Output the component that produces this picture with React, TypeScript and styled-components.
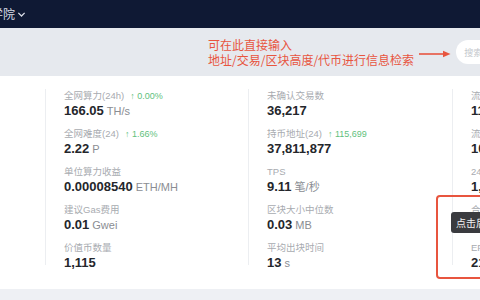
import React from 'react';
import styled, { createGlobalStyle } from 'styled-components';

const GlobalStyle = createGlobalStyle`
  html, body {
    margin: 0;
    padding: 0;
    width: 480px;
    height: 300px;
    overflow: hidden;
    background: #eef0f4;
    font-family: "Liberation Sans", "Noto Sans CJK SC", sans-serif;
  }
`;

const Page = styled.div`
  position: relative;
  width: 480px;
  height: 300px;
  overflow: hidden;
`;

const Header = styled.div`
  height: 28px;
  background: #0f1934;
  display: flex;
  align-items: center;
`;

const NavItem = styled.div`
  margin-left: -9px;
  display: flex;
  align-items: center;
  gap: 2px;
  color: #d8dce6;
  font-family: "Noto Sans CJK SC", sans-serif;
  font-size: 12px;
  line-height: 14px;
`;

const Band = styled.div`
  height: 48px;
  background: #e6e9ee;
  display: flex;
  align-items: center;
  padding-left: 208px;
`;

const Hint = styled.div`
  color: #e8553f;
  font-family: "Noto Sans CJK SC", sans-serif;
  font-size: 12px;
  line-height: 15px;
  white-space: nowrap;
`;

const Arrow = styled.svg`
  margin-left: 5px;
  margin-top: 4px;
  flex-shrink: 0;
`;

const Search = styled.div`
  margin-left: 5px;
  flex-shrink: 0;
  width: 120px;
  height: 24px;
  border-radius: 12px;
  background: #ffffff;
  display: flex;
  align-items: center;
  padding-left: 8px;
  color: #c4c7cc;
  font-family: "Noto Sans CJK SC", sans-serif;
  font-size: 9px;
  white-space: nowrap;
`;

const Card = styled.div`
  background: #ffffff;
  height: 213px;
  box-sizing: border-box;
  padding: 13px 0 0 45px;
  display: grid;
  grid-template-columns: 203px 204px 203px;
  overflow: hidden;
`;

const Column = styled.div`
  border-left: 1px solid #eceef1;
  padding-left: 18px;
  display: flex;
  flex-direction: column;
  gap: 8px;
  height: 176px;
  white-space: nowrap;
`;

const Stat = styled.div`
  display: flex;
  flex-direction: column;
`;

const Label = styled.div`
  font-size: 9.5px;
  line-height: 14px;
  color: #a8abb0;
  display: flex;
  align-items: center;
`;

const Change = styled.span`
  margin-left: 6px;
  font-size: 9px;
  color: #5fbf7d;
`;

const Value = styled.div`
  font-size: 13px;
  line-height: 16px;
  font-weight: 700;
  color: #24262b;
`;

const Unit = styled.span`
  margin-left: 3px;
  font-size: 11px;
  font-weight: 400;
  color: #8a8d93;
`;

const Highlight = styled.div`
  position: absolute;
  left: 436px;
  top: 195px;
  width: 60px;
  height: 84px;
  border: 2px solid #e8553f;
  border-radius: 4px;
  box-sizing: border-box;
`;

const Tip = styled.div`
  position: absolute;
  left: 451px;
  top: 212px;
  height: 21px;
  padding: 0 5px;
  border-radius: 3px;
  background: #3a3b3f;
  color: #f2f2f2;
  font-family: "Noto Sans CJK SC", sans-serif;
  font-size: 10px;
  line-height: 21px;
  white-space: nowrap;
`;

interface StatItem {
  label: string;
  value: string;
  unit?: string;
  change?: string;
}

const columns: StatItem[][] = [
  [
    { label: '全网算力(24h)', value: '166.05', unit: 'TH/s', change: '↑ 0.00%' },
    { label: '全网难度(24)', value: '2.22', unit: 'P', change: '↑ 1.66%' },
    { label: '单位算力收益', value: '0.00008540', unit: 'ETH/MH' },
    { label: '建议Gas费用', value: '0.01', unit: 'Gwei' },
    { label: '价值币数量', value: '1,115' },
  ],
  [
    { label: '未确认交易数', value: '36,217' },
    { label: '持币地址(24)', value: '37,811,877', change: '↑ 115,699' },
    { label: 'TPS', value: '9.11', unit: '笔/秒' },
    { label: '区块大小中位数', value: '0.03', unit: 'MB' },
    { label: '平均出块时间', value: '13', unit: 's' },
  ],
  [
    { label: '流通市值', value: '118,210,633' },
    { label: '流通量', value: '108,523,711' },
    { label: '24h交易量', value: '1,236,118' },
    { label: '合约数量', value: '1,847,210' },
    { label: 'EPI', value: '21.43' },
  ],
];

const App = () => {
  return (
    <>
      <GlobalStyle />
      <Page>
        <Header>
          <NavItem>
            学院
            <svg width='9' height='9' viewBox='0 0 10 10'>
              <path d='M1.5 3.2 L5 6.7 L8.5 3.2' fill='none' stroke='#d8dce6' strokeWidth='1.4' />
            </svg>
          </NavItem>
        </Header>
        <Band>
          <Hint>
            可在此直接输入
            <br />
            地址/交易/区块高度/代币进行信息检索
          </Hint>
          <Arrow width='32' height='8' viewBox='0 0 32 8'>
            <path d='M0 4 H25' stroke='#e8553f' strokeWidth='1.6' />
            <path d='M24 0.8 L31.5 4 L24 7.2 Z' fill='#e8553f' />
          </Arrow>
          <Search>搜索地址/交易</Search>
        </Band>
        <Card>
          {columns.map((col, i) => (
            <Column key={i}>
              {col.map((item) => (
                <Stat key={item.label}>
                  <Label>
                    {item.label}
                    {item.change && <Change>{item.change}</Change>}
                  </Label>
                  <Value>
                    {item.value}
                    {item.unit && <Unit>{item.unit}</Unit>}
                  </Value>
                </Stat>
              ))}
            </Column>
          ))}
        </Card>
        <Highlight />
        <Tip>点击后查看详情</Tip>
      </Page>
    </>
  );
};

export default App;
